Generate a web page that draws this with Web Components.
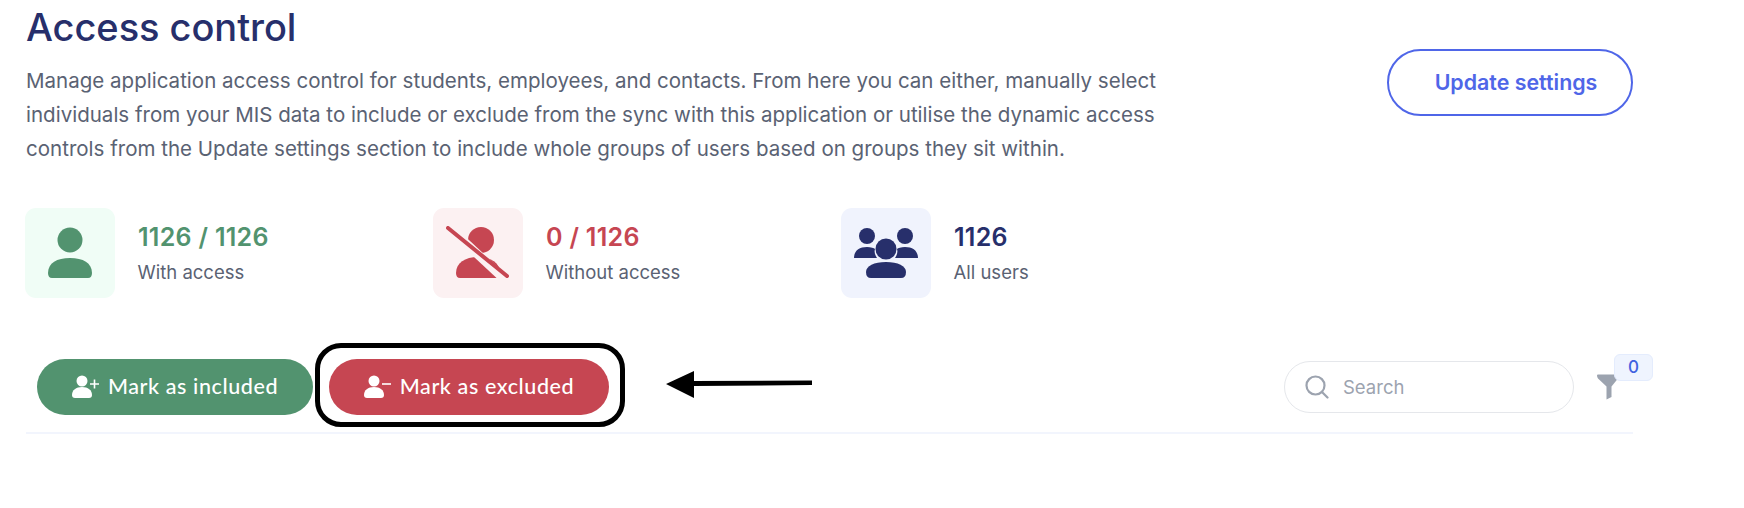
<!DOCTYPE html>
<html><head><meta charset="utf-8">
<style>
html,body{margin:0;background:#fff;overflow:hidden}
body{width:1744px;height:508px;position:relative;font-family:Inter,"Liberation Sans",sans-serif}
</style></head><body>
<access-page></access-page>
<template id="t-stat">
<style>
:host{display:flex;align-items:center;gap:22px;width:408px}
.box{width:90px;height:90px;border-radius:11px;display:flex;align-items:center;justify-content:center;background:var(--bg)}
.num{font:600 25px/30px Inter,sans-serif;letter-spacing:.3px;color:var(--fg);margin:2px 0 6px 1px}
.lab{font:400 18.5px/28px Inter,sans-serif;color:#5a6273;margin-left:.5px}
</style>
<div class="box"><slot name="icon"></slot></div>
<div><div class="num"><slot name="num"></slot></div><div class="lab"><slot name="lab"></slot></div></div>
</template>
<script>
class StatCard extends HTMLElement{
  constructor(){super();this.attachShadow({mode:'open'}).appendChild(document.getElementById('t-stat').content.cloneNode(true));}
}
customElements.define('stat-card',StatCard);
class ActionButton extends HTMLElement{
  constructor(){super();this.attachShadow({mode:'open'}).innerHTML=`<style>
  :host{display:flex;align-items:center;justify-content:center;gap:8px;height:56px;border-radius:28px;background:var(--c);color:#fff;font:500 21.5px/1 Lato,sans-serif;letter-spacing:.6px;box-sizing:border-box;width:var(--w)}
  </style><slot></slot>`;}
}
customElements.define('action-button',ActionButton);
class SearchBox extends HTMLElement{
  constructor(){super();this.attachShadow({mode:'open'}).innerHTML=`<style>
  :host{display:flex;align-items:center;gap:14px;width:290px;height:52px;box-sizing:border-box;border:1.5px solid #e5e7eb;border-radius:26px;padding-left:20px;color:#9ca3af;font:400 18.5px/1 Inter,sans-serif}
  svg{display:block}
  </style><svg width="24" height="24" viewBox="0 0 24 24" fill="none" stroke="#9ca3af" stroke-width="2.2" stroke-linecap="round"><circle cx="10.5" cy="10.5" r="9"/><path d="M17 17l5.5 5.5"/></svg><span>Search</span>`;}
}
customElements.define('search-box',SearchBox);
class FilterButton extends HTMLElement{
  constructor(){super();this.attachShadow({mode:'open'}).innerHTML=`<style>
  :host{display:block;position:relative;width:24px;height:26px}
  svg{display:block}
  .b{position:absolute;left:18px;top:-20px;width:37px;height:25px;border:1px solid #e4ecfd;border-radius:6px;background:#eff4fe;color:#3f63e0;font:500 17px/25px Inter,sans-serif;text-align:center}
  </style><svg width="24" height="26" viewBox="0 0 24 26"><path d="M1 1.5Q1 .5 2 .5H22Q23 .5 23 1.5Q23 3 22 4.5L15.5 12.5V23L10.5 25.5V12.5L2 4.5Q1 3 1 1.5Z" fill="#9ca3af"/></svg><div class="b">0</div>`;}
}
customElements.define('filter-button',FilterButton);
class CalloutMark extends HTMLElement{
  constructor(){super();this.attachShadow({mode:'open'}).innerHTML=`<style>
  :host{display:block;position:absolute;left:666px;top:371px;width:148px;height:28px}
  svg{display:block}
  </style><svg width="148" height="28" viewBox="0 0 148 28"><path d="M0 13L28 0V10L146 9.5V14L28 15V27Z" fill="#000"/></svg>`;}
}
customElements.define('callout-mark',CalloutMark);
class AccessPage extends HTMLElement{
  constructor(){super();this.attachShadow({mode:'open'}).innerHTML=`<style>
  :host{display:block;width:1633px;padding:0 0 0 26px;box-sizing:border-box}
  header{display:flex;justify-content:space-between;align-items:flex-start}
  h1{margin:0;padding-top:4px;font:500 38px/46px Inter,sans-serif;color:#272f6b;letter-spacing:-.05px}
  p{margin:14px 0 0;width:1170px;font:400 20.54px/34px Inter,sans-serif;color:#5a6273}
  .upd{box-sizing:border-box;margin-top:49px;width:246px;height:67px;border:2px solid #4f66e8;border-radius:34px;display:flex;align-items:center;justify-content:center;padding-left:12px;color:#4f66e8;font:600 21.4px/1 Inter,sans-serif}
  .stats{display:flex;margin-top:42px;margin-left:-1px}
  .toolbar{display:flex;align-items:center;margin-top:61px;padding:0 0 17px 11px;border-bottom:2px solid #f2f5fd;height:56px}
  .acts{display:flex;gap:16px;flex:1}
  .bi{display:block}
  .tools{display:flex;align-items:center;gap:22px;margin-right:13px}
  .ring{position:absolute;left:315px;top:343px;width:310px;height:84px;box-sizing:border-box;border:5px solid #000;border-radius:26px}
  </style>
  <header><div><h1>Access control</h1>
  <p>Manage application access control for students, employees, and contacts. From here you can either, manually select individuals from your MIS data to include or exclude from the sync with this application or utilise the dynamic access controls from the Update settings section to include whole groups of users based on groups they sit within.</p></div>
  <div class="upd">Update settings</div></header>
  <div class="stats">
   <stat-card style="--bg:#f0fdf6;--fg:#52936f">
    <svg slot="icon" width="46" height="52" viewBox="0 0 46 52"><circle cx="23" cy="13" r="12.5" fill="#52936f"/><path d="M1 46C1 36 10 31 23 31S45 36 45 46Q45 51 41 51H5Q1 51 1 46Z" fill="#52936f"/></svg>
    <span slot="num">1126 / 1126</span><span slot="lab">With access</span></stat-card>
   <stat-card style="--bg:#fcf1f2;--fg:#c64652">
    <svg slot="icon" width="66" height="54" viewBox="0 0 66 54"><circle cx="36" cy="14" r="13" fill="#c64652"/><path d="M11 47C11 37 20 31 33 31S55 37 55 47Q55 52 51 52H15Q11 52 11 47Z" fill="#c64652"/><path d="M-2 -7L70 60" stroke="#fcf1f2" stroke-width="9" transform="translate(0,3)"/><path d="M3 2L62 50" stroke="#c64652" stroke-width="4" stroke-linecap="round"/></svg>
    <span slot="num">0 / 1126</span><span slot="lab">Without access</span></stat-card>
   <stat-card style="--bg:#f0f3fd;--fg:#272f6b">
    <svg slot="icon" width="64" height="50" viewBox="0 0 64 50" fill="#272f6b"><circle cx="13" cy="8" r="8"/><circle cx="51" cy="8" r="8"/><path d="M0 30C0 23 5 19 13 19c4 0 7 1 8 2-1 3 0 6 2 9Z"/><path d="M64 30C64 23 59 19 51 19c-4 0-7 1-8 2 1 3 0 6-2 9Z"/><circle cx="32" cy="21" r="10.500"/><path d="M12 44c0-6 8-10 20-10s20 4 20 10q0 6-5 6H17q-5 0-5-6Z"/></svg>
    <span slot="num">1126</span><span slot="lab">All users</span></stat-card>
  </div>
  <div class="toolbar">
   <div class="acts">
    <action-button style="--c:#52936f;--w:276px"><svg class="bi" width="28" height="24" viewBox="0 0 28 24" fill="#fff"><circle cx="10" cy="6" r="5.500"/><path d="M0 20c0-5 4-8 10-8s10 3 10 8q0 3-3 3H3q-3 0-3-3Z"/><path d="M18 9h9M22.500 4.500v9" stroke="#fff" stroke-width="1.600" fill="none"/></svg><span>Mark as included</span></action-button>
    <action-button style="--c:#c64652;--w:280px"><svg class="bi" width="28" height="24" viewBox="0 0 28 24" fill="#fff"><circle cx="10" cy="6" r="5.500"/><path d="M0 20c0-5 4-8 10-8s10 3 10 8q0 3-3 3H3q-3 0-3-3Z"/><path d="M18 9h9" stroke="#fff" stroke-width="1.600" fill="none"/></svg><span>Mark as excluded</span></action-button>
   </div>
   <div class="tools"><search-box></search-box><filter-button></filter-button></div>
  </div>
  <div class="ring"></div>
  <callout-mark></callout-mark>`;}
}
customElements.define('access-page',AccessPage);
</script>
</body></html>
